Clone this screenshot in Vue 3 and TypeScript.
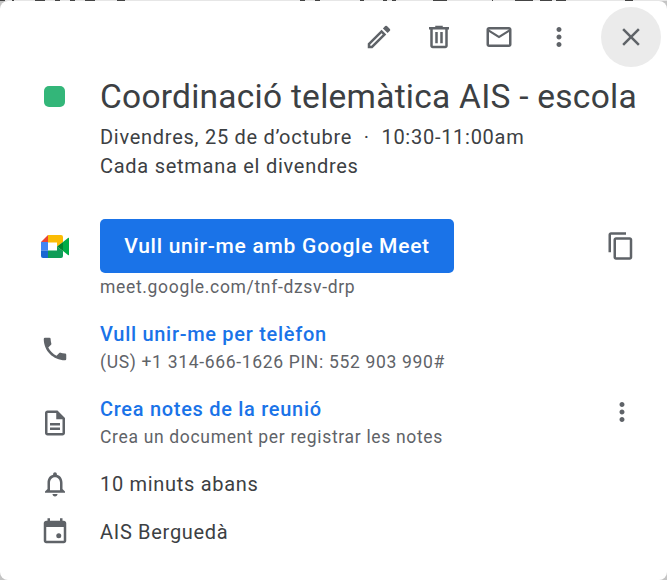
<script setup lang="ts">
const G = '#5f6368'
// tops of the letters of the page behind the card, cut off at the window edge
const behind = [
  [0, 5], [12, 2], [35, 10], [55, 5], [70, 5], [85, 10], [117, 8], [300, 5], [315, 5],
  [360, 4], [383, 4], [392, 4], [433, 14], [492, 1], [515, 18], [540, 12], [556, 10], [625, 8],
]
</script>

<template>
  <div class="page">
    <div class="strip">
      <i v-for="b in behind" :key="b[0]" :style="{ left: b[0] + 'px', width: b[1] + 'px' }"></i>
    </div>
    <div class="card">
      <div class="actions">
        <button class="act" aria-label="edit">
          <svg width="30" height="30" viewBox="0 0 24 24"><path :fill="G" d="M3 17.25V21h3.75L17.81 9.94l-3.75-3.75L3 17.25zM5.92 19H5v-.92l9.06-9.06.92.92L5.92 19zM20.71 5.63l-2.34-2.34a1 1 0 0 0-1.41 0l-1.83 1.83 3.75 3.75 1.83-1.83a1 1 0 0 0 0-1.41z"/></svg>
        </button>
        <button class="act" aria-label="delete">
          <svg width="30" height="30" viewBox="0 0 24 24"><path :fill="G" d="M15 4V3H9v1H4v2h1v13c0 1.1.9 2 2 2h10c1.1 0 2-.9 2-2V6h1V4h-5zm2 15H7V6h10v13zM9 8h2v9H9zm4 0h2v9h-2z"/></svg>
        </button>
        <button class="act" aria-label="email">
          <svg width="30" height="30" viewBox="0 0 24 24"><path :fill="G" d="M22 6c0-1.1-.9-2-2-2H4c-1.1 0-2 .9-2 2v12c0 1.1.9 2 2 2h16c1.1 0 2-.9 2-2V6zm-2 0l-8 5-8-5h16zm0 12H4V8l8 5 8-5v10z"/></svg>
        </button>
        <button class="act" aria-label="more">
          <svg width="30" height="30" viewBox="0 0 24 24"><path :fill="G" d="M12 8c1.100 0 2-.9 2-2s-.9-2-2-2-2 .9-2 2 .9 2 2 2zm0 2c-1.100 0-2 .9-2 2s.9 2 2 2 2-.9 2-2-.9-2-2-2zm0 6c-1.100 0-2 .9-2 2s.9 2 2 2 2-.9 2-2-.9-2-2-2z"/></svg>
        </button>
        <button class="act close" aria-label="close">
          <svg width="30" height="30" viewBox="0 0 24 24"><path :fill="G" d="M19 6.410L17.590 5 12 10.590 6.410 5 5 6.410 10.590 12 5 17.590 6.410 19 12 13.410 17.590 19 19 17.590 13.410 12z"/></svg>
        </button>
      </div>

      <div class="row head">
        <div class="ic"><span class="swatch"></span></div>
        <div class="body">
          <div class="title">Coordinació telemàtica AIS - escola</div>
          <div class="when first">Divendres, 25 de d’octubre <span class="dot">·</span> 10:30-11:00am</div>
          <div class="when">Cada setmana el divendres</div>
        </div>
      </div>

      <div class="row meet">
        <div class="ic">
          <svg width="28" height="23" viewBox="0 0 28 23">
            <path fill="#ea4335" d="M7 0 0 7h7z"/>
            <path fill="#4285f4" d="M0 7h7v8.500H0z"/>
            <path fill="#1967d2" d="M0 15.500h7V23H2a2 2 0 0 1-2-2z"/>
            <path fill="#fbbc04" d="M7 0h13a2 2 0 0 1 2 2v5l-6 4.500V7.500H7z"/>
            <path fill="#0f9d58" d="M7 23h13a2 2 0 0 0 2-2v-5l-6-4.500v4H7z"/>
            <path fill="#00832d" d="M16 11.500 22 7v9z"/>
            <path fill="#00ac47" d="M22 7l5-4.100a.6.6 0 0 1 1 .5v16.200a.6.6 0 0 1-1 .5L22 16z"/>
          </svg>
        </div>
        <div class="body">
          <div class="meetline">
            <button class="join">Vull unir-me amb Google Meet</button>
            <button class="act copy" aria-label="copy">
              <svg width="30" height="30" viewBox="0 0 24 24"><path :fill="G" d="M16 1H4c-1.100 0-2 .9-2 2v14h2V3h12V1zm3 4H8c-1.100 0-2 .9-2 2v14c0 1.100.9 2 2 2h11c1.100 0 2-.9 2-2V7c0-1.100-.9-2-2-2zm0 16H8V7h11v14z"/></svg>
            </button>
          </div>
          <div class="sub link-sub">meet.google.com/tnf-dzsv-drp</div>
        </div>
      </div>

      <div class="row phone">
        <div class="ic">
          <svg width="30" height="30" viewBox="0 0 24 24"><path :fill="G" d="M20 15.500c-1.250 0-2.450-.2-3.570-.57a1 1 0 0 0-1.020.24l-2.200 2.200a15.050 15.050 0 0 1-6.590-6.580l2.200-2.210a.96.96 0 0 0 .25-1A11.360 11.360 0 0 1 8.500 4a1 1 0 0 0-1-1H4a1 1 0 0 0-1 1c0 9.390 7.610 17 17 17a1 1 0 0 0 1-1v-3.500a1 1 0 0 0-1-1z"/></svg>
        </div>
        <div class="body">
          <div class="link">Vull unir-me per telèfon</div>
          <div class="sub">(US) +1 314-666-1626 PIN: 552 903 990#</div>
        </div>
      </div>

      <div class="row notes">
        <div class="ic">
          <svg width="30" height="30" viewBox="0 0 24 24"><path :fill="G" d="M14 2H6c-1.100 0-2 .9-2 2v16c0 1.100.9 2 2 2h12c1.100 0 2-.9 2-2V8l-6-6zM6 20V4h7v5h5v11H6zm2-8h8v2H8zm0 3.500h8v2H8z"/></svg>
        </div>
        <div class="body notes-body">
          <div>
            <div class="link">Crea notes de la reunió</div>
            <div class="sub">Crea un document per registrar les notes</div>
          </div>
          <button class="act more" aria-label="more notes">
            <svg width="30" height="30" viewBox="0 0 24 24"><path :fill="G" d="M12 8c1.100 0 2-.9 2-2s-.9-2-2-2-2 .9-2 2 .9 2 2 2zm0 2c-1.100 0-2 .9-2 2s.9 2 2 2 2-.9 2-2-.9-2-2-2zm0 6c-1.100 0-2 .9-2 2s.9 2 2 2 2-.9 2-2-.9-2-2-2z"/></svg>
          </button>
        </div>
      </div>

      <div class="row plain remind">
        <div class="ic">
          <svg width="30" height="30" viewBox="0 0 24 24"><path :fill="G" d="M12 22c1.100 0 2-.9 2-2h-4c0 1.100.9 2 2 2zm6-6v-5c0-3.070-1.630-5.640-4.500-6.320V4c0-.83-.67-1.500-1.500-1.500s-1.500.67-1.500 1.500v.68C7.640 5.360 6 7.920 6 11v5l-2 2v1h16v-1l-2-2zm-2 1H8v-6c0-2.480 1.510-4.500 4-4.500s4 2.020 4 4.500v6z"/></svg>
        </div>
        <div class="body plain-text">10 minuts abans</div>
      </div>

      <div class="row plain cal">
        <div class="ic">
          <svg width="30" height="30" viewBox="0 0 24 24"><path :fill="G" d="M19 3h-1V1h-2v2H8V1H6v2H5c-1.100 0-2 .9-2 2v14c0 1.100.9 2 2 2h14c1.100 0 2-.9 2-2V5c0-1.100-.9-2-2-2zm0 16H5V8h14v11z"/><circle :fill="G" cx="15" cy="15" r="2"/></svg>
        </div>
        <div class="body plain-text">AIS Berguedà</div>
      </div>
    </div>
  </div>
</template>

<style scoped>
.page { width: 667px; height: 580px; background: #c4c4c4; overflow: hidden; position: relative; font-family: Roboto, "Noto Sans", sans-serif; }
.strip { height: 1px; background: #e6e6e6; position: relative; }
.strip i { position: absolute; top: 0; height: 1px; background: #444; }
.card { height: 579px; background: #fff; border-radius: 8px; box-sizing: border-box; }
.actions { display: flex; justify-content: flex-end; align-items: flex-start; padding: 6px 6px 0 0; height: 60px; box-sizing: border-box; }
.act { border: 0; background: none; padding: 0; display: flex; align-items: center; justify-content: center; width: 40px; height: 40px; }
.actions .act { width: 60px; height: 60px; }
.actions .close { border-radius: 50%; background: #ebebeb; margin-left: 12px; }
.row { display: flex; }
.ic { width: 100px; flex: none; display: flex; justify-content: center; padding-left: 10px; box-sizing: border-box; }
.body { flex: 1; min-width: 0; }
.head { margin-top: 15px; }
.head .ic { padding-left: 8px; }
.swatch { display: block; width: 21px; height: 21px; border-radius: 5px; background: #33b679; margin-top: 10px; }
.title { font-size: 33.500px; line-height: 42px; color: #3c4043; white-space: nowrap; letter-spacing: 0.25px; }
.when { font-size: 20px; line-height: 29px; color: #3c4043; white-space: nowrap; letter-spacing: 0.73px; }
.when.first { margin-top: 5px; }
.dot { margin: 0 6px; }
.meet { margin-top: 38px; }
.meet .ic { height: 54px; align-items: center; }
.meetline { display: flex; justify-content: space-between; align-items: center; padding-right: 26px; }
.join { width: 354px; height: 54px; border: 0; border-radius: 5px; background: #1a73e8; color: #fff; font: 500 21px Roboto, sans-serif; letter-spacing: 0.73px; }
.sub { font-size: 17.500px; line-height: 24px; color: #5f6368; white-space: nowrap; letter-spacing: 0.67px; margin-top: 2px; }
.link { font-size: 20px; font-weight: 500; line-height: 28px; color: #1a73e8; white-space: nowrap; letter-spacing: 0.7px; }
.phone { margin-top: 21px; }
.phone .ic { padding-top: 14px; }
.notes { margin-top: 21px; }
.notes .ic { padding-top: 13px; }
.notes-body { display: flex; justify-content: space-between; padding-right: 25px; }
.more { margin-top: -3px; }
.plain { align-items: center; }
.plain-text { font-size: 20px; line-height: 28px; color: #3c4043; letter-spacing: 0.7px; }
.remind { margin-top: 20px; }
.cal { margin-top: 18px; }
</style>
